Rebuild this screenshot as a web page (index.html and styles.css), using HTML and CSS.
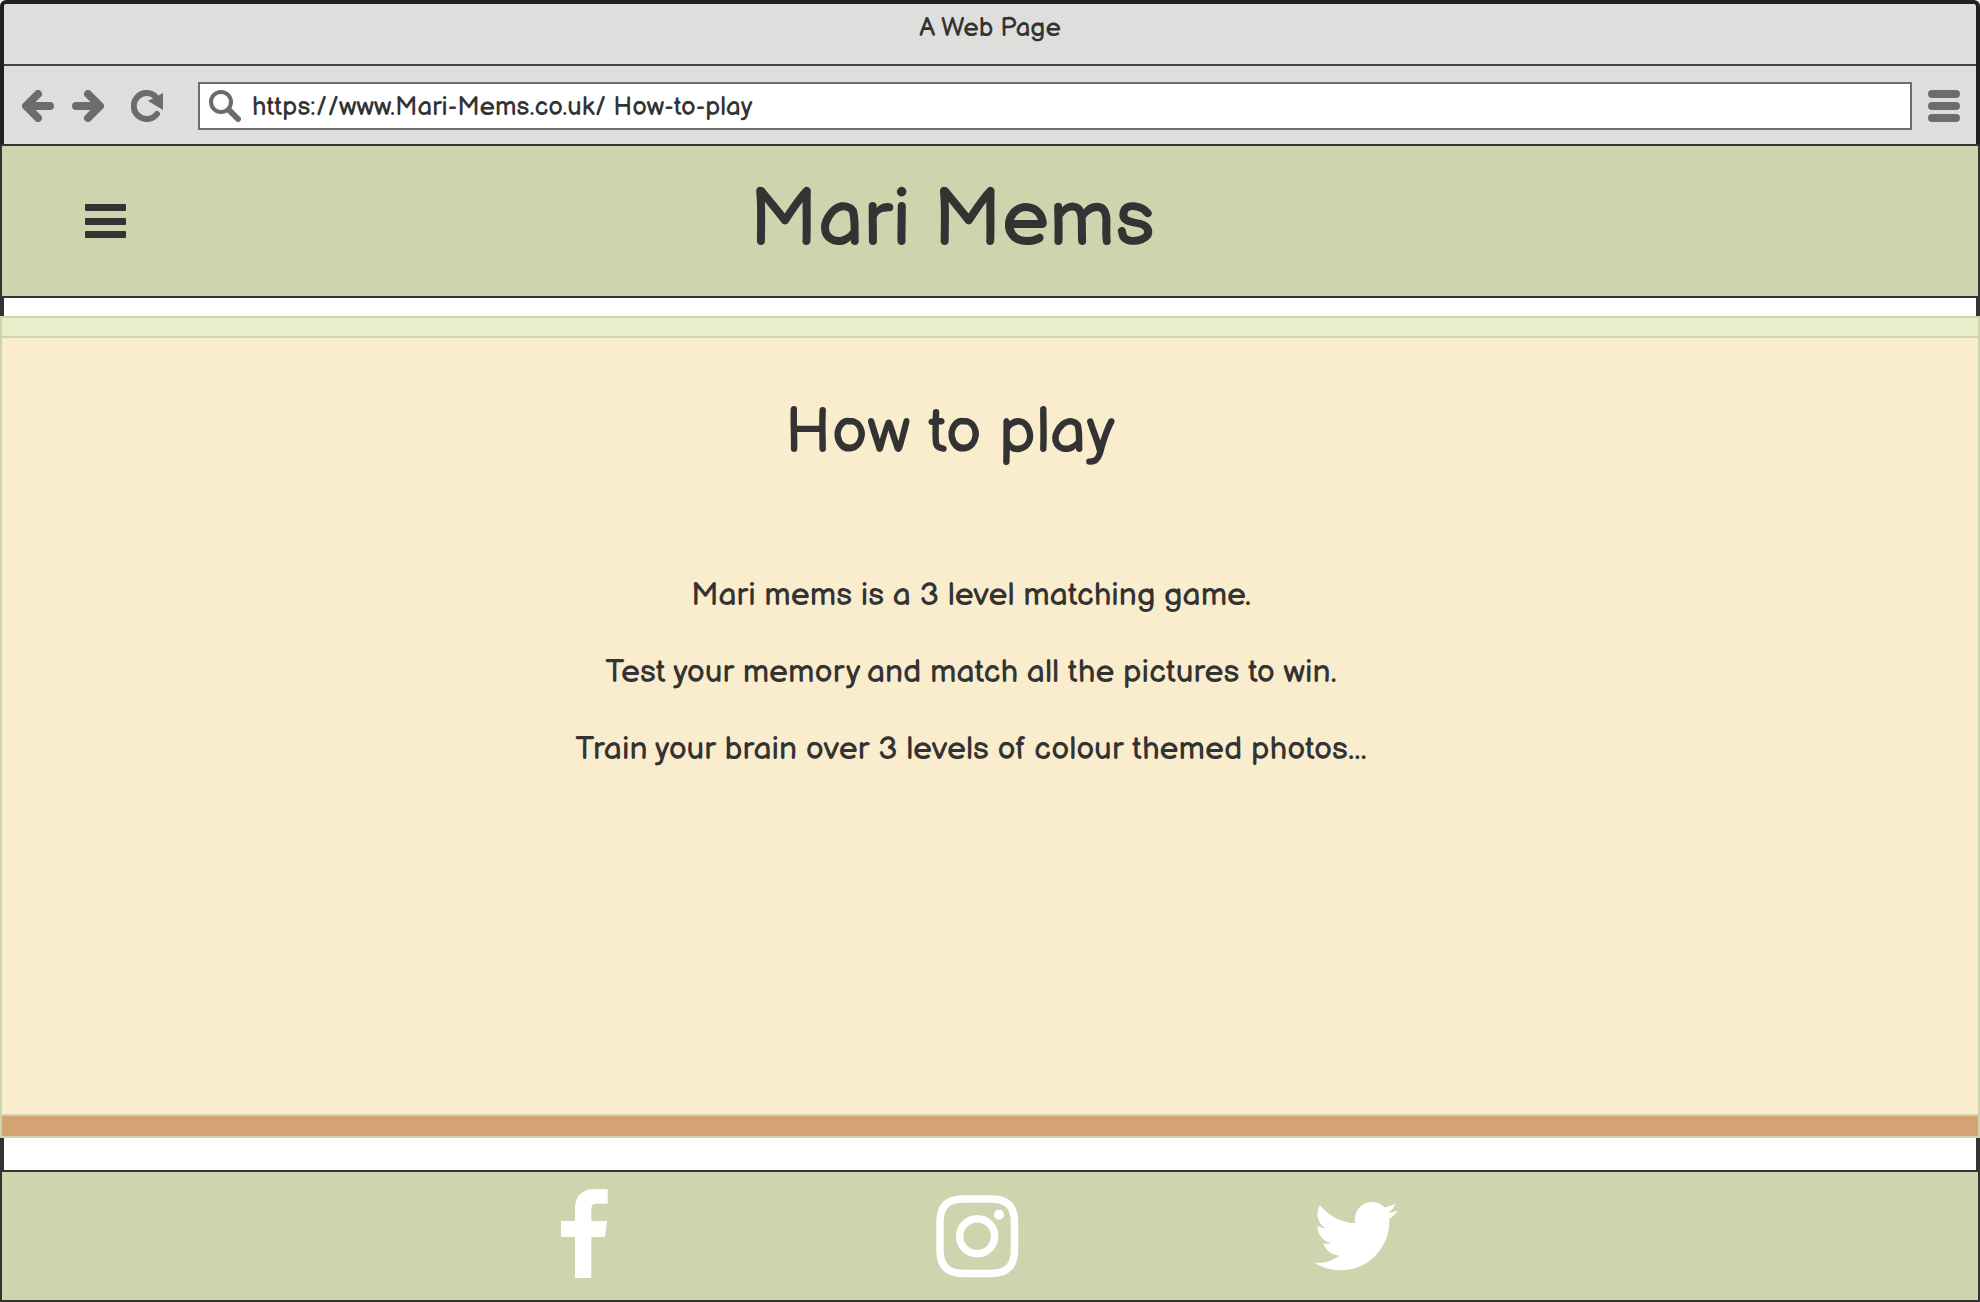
FILE: index.html
```html
<!DOCTYPE html>
<html lang="en">
<head>
<meta charset="utf-8">
<meta name="viewport" content="width=device-width, initial-scale=1">
<title>Mari Mems - How to play</title>
<link rel="stylesheet" href="styles.css">
</head>
<body>
<div class="browser">
  <div class="titlebar">A Web Page</div>
  <div class="toolbar">
    <button class="tool" type="button" aria-label="Back"><svg viewBox="0 0 32 32"><path class="arrow" d="M16 4 4 16l12 12M6 16h22"/></svg></button>
    <button class="tool" type="button" aria-label="Forward"><svg viewBox="0 0 32 32"><path class="arrow" d="m16 4 12 12-12 12M26 16H4"/></svg></button>
    <button class="tool tool-reload" type="button" aria-label="Reload"><svg viewBox="0 0 32 32"><path class="ring" d="M26 24A13 13 0 1 1 24 6"/><path d="M32 3v17L17 11z"/></svg></button>
    <label class="address">
      <svg viewBox="0 0 32 32"><circle class="lens" cx="12" cy="12" r="10"/><path class="handle" d="m20 20 9 9"/></svg>
      <input type="text" aria-label="Address" value="https://www.Mari-Mems.co.uk/ How-to-play">
    </label>
    <button class="tool" type="button" aria-label="Browser menu"><svg viewBox="0 0 32 32"><rect width="32" height="8" rx="4"/><rect y="12" width="32" height="8" rx="4"/><rect y="24" width="32" height="8" rx="4"/></svg></button>
  </div>
</div>
<div class="viewport">
  <header class="site-header">
    <button class="menu" type="button" aria-label="Menu"><svg viewBox="0 0 42 34"><rect width="41" height="7" rx="1"/><rect y="14" width="41" height="7" rx="1"/><rect y="27" width="41" height="7" rx="1"/></svg></button>
    <h1>Mari Mems</h1>
  </header>
  <div class="panel">
    <div class="strip strip-top"></div>
    <main>
      <h2>How to play</h2>
      <div class="copy">
        <p>Mari mems is a 3 level matching game.</p>
        <p>Test your memory and match all the pictures to win.</p>
        <p>Train your brain over 3 levels of colour themed photos...</p>
      </div>
    </main>
    <div class="strip strip-bottom"></div>
  </div>
  <footer class="site-footer">
    <a class="facebook" href="#" aria-label="Facebook"><svg width="47" height="89" viewBox="0 0 47 89"><path d="M46.700 0v14.700H36c-4.500 0-5.700 2-5.700 6.500V32H46l-2 16H30.300v41H14V48H0V32h14V19.500C14 7 21.500 0 33 0z"/></svg></a>
    <a href="#" aria-label="Instagram"><svg width="83" height="83" viewBox="0 0 83 83"><path class="camera" d="M27 4H55C71 4 78.500 11.500 78.500 27V55C78.500 71 71 78.500 55 78.500H27C11.500 78.500 4 71 4 55V27C4 11.500 11.500 4 27 4Z"/><circle class="camera" cx="41.200" cy="41.300" r="17.500"/><circle cx="63" cy="19.700" r="5"/></svg></a>
    <a href="#" aria-label="Twitter"><svg width="84" height="76" viewBox="0 48 512 463"><path d="M459.370 151.716c.325 4.548.325 9.097.325 13.645 0 138.720-105.583 298.558-298.558 298.558-59.452 0-114.680-17.219-161.137-47.106 8.447.974 16.568 1.299 25.340 1.299 49.055 0 94.213-16.568 130.274-44.832-46.132-.975-84.792-31.188-98.112-72.772 6.498.974 12.995 1.624 19.818 1.624 9.421 0 18.843-1.300 27.614-3.573-48.081-9.747-84.143-51.980-84.143-102.985v-1.299c13.969 7.797 30.214 12.670 47.431 13.319-28.264-18.843-46.781-51.005-46.781-87.391 0-19.492 5.197-37.360 14.294-52.954 51.655 63.675 129.300 105.258 216.365 109.807-1.624-7.797-2.599-15.918-2.599-24.040 0-57.828 46.782-104.934 104.934-104.934 30.213 0 57.502 12.670 76.670 33.137 23.715-4.548 46.456-13.320 66.599-25.340-7.798 24.366-24.366 44.833-46.132 57.827 21.117-2.273 41.584-8.122 60.426-16.243-14.292 20.791-32.161 39.308-52.628 54.253z"/></svg></a>
  </footer>
</div>
</body>
</html>
```
FILE: styles.css
```css
:root {
  --ink: #333;
  --icon: #6c6c6c;
  --chrome: #dededc;
  --frame: #231f20;
  --green: #ccd5ae;
}

* { box-sizing: border-box; }

body {
  margin: 0;
  min-height: 100vh;
  display: flex;
  flex-direction: column;
  background: #fff;
  color: var(--ink);
  font-family: "Balsamiq Sans", Lato, "Open Sans", sans-serif;
  font-weight: 500;
}

h1, h2, p { margin: 0; font-weight: 500; }

button {
  padding: 0;
  border: 0;
  background: none;
  cursor: pointer;
}

svg { display: block; }

/* browser chrome */
.browser {
  border: 4px solid var(--frame);
  border-bottom: 0;
  border-radius: 6px 6px 0 0;
  background: var(--chrome);
}

.titlebar {
  height: 62px;
  padding-top: 9px;
  border-bottom: 2px solid #444;
  text-align: center;
  font-size: 26px;
  line-height: 32px;
}

.toolbar {
  height: 78px;
  padding: 2px 16px 0 18px;
  display: flex;
  align-items: center;
  gap: 18px;
}

.tool, .tool svg { width: 32px; height: 32px; }
.tool { flex: none; fill: var(--icon); }
.tool-reload { margin: 0 17px 0 9px; }

.arrow, .ring, .lens, .handle {
  fill: none;
  stroke: var(--icon);
  stroke-linecap: round;
  stroke-linejoin: round;
}
.arrow { stroke-width: 8px; }
.ring, .handle { stroke-width: 6px; }
.lens { stroke-width: 4px; }

.address {
  flex: 1;
  height: 48px;
  padding: 0 9px;
  margin-right: -2px;
  display: flex;
  align-items: center;
  gap: 11px;
  border: 2px solid var(--icon);
  background: #fff;
}
.address svg { width: 32px; height: 32px; flex: none; }
.address input {
  flex: 1;
  min-width: 0;
  padding: 3px 0 0;
  border: 0;
  outline: 0;
  background: none;
  color: inherit;
  font: inherit;
  font-size: 26px;
}

/* page */
.viewport {
  flex: 1;
  display: flex;
  flex-direction: column;
  border: solid var(--ink);
  border-width: 0 4px;
}

.site-header {
  height: 154px;
  margin: 0 -4px 18px;
  padding: 0 76px 0 0;
  display: grid;
  grid-template-columns: 1fr auto 1fr;
  align-items: center;
  border: 2px solid var(--ink);
  background: var(--green);
}
.menu { justify-self: start; margin-left: 83px; fill: var(--ink); }
.menu svg { width: 42px; height: 34px; }
.site-header h1 { font-size: 80px; line-height: 96px; }

.panel {
  flex: 1;
  margin: 0 -4px 32px;
  display: flex;
  flex-direction: column;
  border: 2px solid var(--green);
}
.strip { height: 20px; }
.strip-top { background: #e9edc9; border-bottom: 2px solid var(--green); }
.strip-bottom { height: 22px; background: #d4a373; border-top: 2px solid var(--green); }

main {
  flex: 1;
  padding-top: 57px;
  background: #faedcd;
  text-align: center;
}
main h2 { padding-right: 80px; font-size: 64px; line-height: 76px; }
.copy { margin-top: 86px; padding-right: 38px; font-size: 32px; line-height: 77px; }

.site-footer {
  height: 132px;
  margin: 0 -4px;
  padding: 0 21px 22px 0;
  display: flex;
  justify-content: center;
  align-items: flex-end;
  gap: 295px;
  border: 2px solid var(--ink);
  background: var(--green);
  fill: #fff;
}
.facebook { margin-right: 33px; }
.camera { fill: none; stroke: #fff; stroke-width: 7.5; }
```
